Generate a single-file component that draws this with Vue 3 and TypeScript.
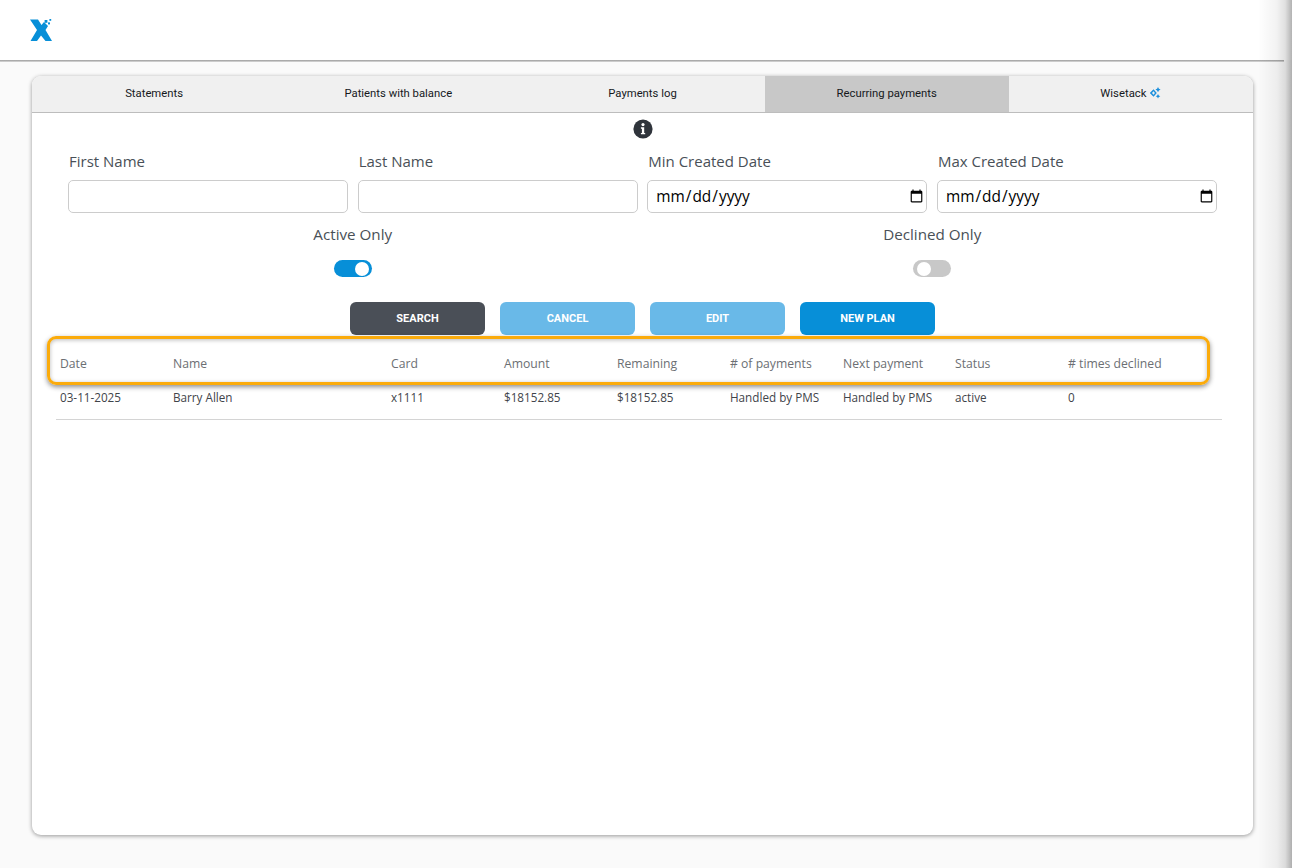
<script setup lang="ts">
import { ref } from 'vue'

const tabs = ['Statements', 'Patients with balance', 'Payments log', 'Recurring payments', 'Wisetack']
const activeTab = ref('Recurring payments')

const columns = ['Date', 'Name', 'Card', 'Amount', 'Remaining', '# of payments', 'Next payment', 'Status', '# times declined']
const rows = [
  ['03-11-2025', 'Barry Allen', 'x1111', '$18152.85', '$18152.85', 'Handled by PMS', 'Handled by PMS', 'active', '0']
]

const activeOnly = ref(true)
const declinedOnly = ref(false)
</script>

<template>
  <div class="page">
    <header class="topbar">
      <svg class="logo" viewBox="0 0 22 22" width="22" height="22">
        <path fill="#078fd8" d="M0 .5h8L11.5 6 14 3l4 4-2.500 4L22 22h-6.500L11 16.500 7 22H.5L7 11z" />
        <rect x="14.600" y="1" width="2.800" height="2.800" fill="#078fd8" />
        <rect x="18" y="3.400" width="2" height="2" fill="#078fd8" />
        <rect x="19.400" y="0" width="1.800" height="1.800" fill="#078fd8" />
      </svg>
    </header>

    <main class="content">
      <section class="card">
        <nav class="tabs">
          <button
            v-for="tab in tabs"
            :key="tab"
            class="tab"
            :class="{ active: tab === activeTab }"
            @click="activeTab = tab"
          >
            {{ tab }}
            <svg v-if="tab === 'Wisetack'" class="sparkle" viewBox="0 0 12 12" width="12" height="12">
              <path fill="#1b8fdc" d="M4.500 2.200 7.800 6 4.500 9.800.8 6zM4.500 4.300 3 6l1.500 1.700L5.900 6z" fill-rule="evenodd" />
              <path fill="#1b8fdc" d="M9 0l.9 1.700 1.700.9-1.700.9L9 5.200l-.9-1.700-1.700-.9 1.700-.9zM9 7l.8 1.500 1.500.8-1.500.8L9 11.600l-.8-1.500-1.500-.8 1.500-.8z" />
            </svg>
          </button>
        </nav>

        <div class="info-row">
          <svg viewBox="0 0 20 20" width="20" height="20">
            <circle cx="10" cy="10" r="9.600" fill="#2f343b" />
            <circle cx="10" cy="5.600" r="1.600" fill="#fff" />
            <path fill="#fff" d="M7.900 8.300h3.300v5.600h1v1.400H7.900v-1.400h1V9.700h-1z" />
          </svg>
        </div>

        <div class="filters">
          <label class="field">
            <span>First Name</span>
            <input type="text" />
          </label>
          <label class="field">
            <span>Last Name</span>
            <input type="text" />
          </label>
          <label class="field">
            <span>Min Created Date</span>
            <input type="date" />
          </label>
          <label class="field">
            <span>Max Created Date</span>
            <input type="date" />
          </label>
        </div>

        <div class="switches">
          <div class="switch-field">
            <span>Active Only</span>
            <button class="switch" :class="{ on: activeOnly }" @click="activeOnly = !activeOnly"><i></i></button>
          </div>
          <div class="switch-field">
            <span>Declined Only</span>
            <button class="switch" :class="{ on: declinedOnly }" @click="declinedOnly = !declinedOnly"><i></i></button>
          </div>
        </div>

        <div class="actions">
          <button class="btn dark">SEARCH</button>
          <button class="btn light">CANCEL</button>
          <button class="btn light">EDIT</button>
          <button class="btn primary">NEW PLAN</button>
        </div>

        <div class="table">
          <div class="row head">
            <div v-for="col in columns" :key="col">{{ col }}</div>
          </div>
          <div v-for="(row, i) in rows" :key="i" class="row body">
            <div v-for="(cell, j) in row" :key="j">{{ cell }}</div>
          </div>
          <div class="callout"></div>
        </div>
      </section>
    </main>

    <div class="edge-shadow"></div>
  </div>
</template>

<style scoped>
.page {
  position: relative;
  height: 868px;
  overflow: hidden;
  background: #fafafa;
  font-family: "Open Sans", "Liberation Sans", sans-serif;
}

.topbar {
  position: relative;
  height: 60px;
  display: flex;
  align-items: center;
  padding-left: 30px;
  background: #fff;
  box-sizing: border-box;
}

/* the rule under the header stops short of the right edge */
.topbar::after {
  content: "";
  position: absolute;
  left: 0;
  right: 8px;
  bottom: -2px;
  height: 2px;
  background: linear-gradient(to bottom, #9a9a9a, #dcdcdc);
}

.content {
  padding: 16px 39px 0 32px;
}

.card {
  height: 759px;
  background: #fff;
  border-radius: 9px;
  overflow: hidden;
  box-shadow: 0 1px 4px rgba(0, 0, 0, 0.4);
}

.tabs {
  display: grid;
  grid-template-columns: repeat(5, 1fr);
  height: 37px;
  background: #f0f0f0;
  border-bottom: 1px solid #bdbdbd;
  box-sizing: border-box;
}

.tab {
  display: flex;
  align-items: center;
  justify-content: center;
  gap: 3px;
  padding: 0 0 2px;
  border: none;
  background: transparent;
  color: #15181c;
  font-family: Roboto, "Liberation Sans", sans-serif;
  font-size: 11.300px;
  font-weight: 400;
  cursor: pointer;
}

.tab.active {
  background: #c8c8c8;
}

.info-row {
  display: flex;
  justify-content: center;
  padding-top: 6px;
  height: 20px;
}

.filters {
  display: grid;
  grid-template-columns: repeat(4, 1fr);
  column-gap: 9.700px;
  padding: 0 36.100px 0 36px;
  margin-top: 11px;
}

.field {
  display: flex;
  flex-direction: column;
}

.field span,
.switch-field span {
  line-height: 22px;
  color: #495057;
}

.field span {
  margin-bottom: 8px;
  padding-left: 1px;
  font-size: 15px;
}

.switch-field span {
  font-size: 15.200px;
}

.field input {
  height: 33px;
  padding: 0 0 0 7px;
  border: 1px solid #cccccc;
  border-radius: 5px;
  background: #fff;
  box-sizing: border-box;
  font-family: "Open Sans", "Liberation Sans", sans-serif;
  font-size: 15.400px;
  color: #000;
  outline: none;
}

.switches {
  display: grid;
  grid-template-columns: repeat(2, 1fr);
  column-gap: 10px;
  padding: 0 36px;
  margin-top: 10px;
}

.switch-field {
  display: flex;
  flex-direction: column;
  align-items: center;
}

.switch {
  position: relative;
  width: 38px;
  height: 17px;
  margin-top: 15px;
  padding: 0;
  border: none;
  border-radius: 9px;
  background: #c8c8c8;
  cursor: pointer;
}

.switch i {
  position: absolute;
  top: 1.500px;
  left: 3.500px;
  width: 14px;
  height: 14px;
  border-radius: 50%;
  background: #fff;
}

.switch.on {
  background: #078fd8;
}

.switch.on i {
  left: 21.500px;
}

.actions {
  display: flex;
  justify-content: center;
  gap: 15px;
  margin-top: 25px;
}

.btn {
  width: 135px;
  height: 33px;
  border: none;
  border-radius: 6px;
  color: #fff;
  font-family: Roboto, "Liberation Sans", sans-serif;
  font-size: 11px;
  font-weight: 700;
  cursor: pointer;
}

.btn.dark {
  background: #4a4f57;
}

.btn.light {
  background: #69b9e8;
}

.btn.primary {
  background: #078fd8;
}

.table {
  position: relative;
  margin: 4px 31px 0 24px;
  font-size: 12.200px;
}

.row {
  display: grid;
  grid-template-columns: 113px 218px 113px 113px 113px 113px 112px 113px 1fr;
  padding-left: 4px;
}

.row.head {
  height: 45px;
  padding-top: 16px;
  line-height: 18px;
  color: #6c6f73;
  box-sizing: border-box;
}

.row.body {
  height: 36px;
  padding-top: 4px;
  line-height: 18px;
  color: #3f444a;
  border-bottom: 1px solid #d4d4d4;
  box-sizing: border-box;
  font-size: 11.700px;
}

.callout {
  position: absolute;
  top: -3px;
  left: -9px;
  right: 12px;
  height: 49px;
  border: 3px solid #fbab0b;
  border-radius: 9px;
  box-sizing: border-box;
  box-shadow: 0 2px 5px rgba(0, 0, 0, 0.45), inset 0 1px 4px rgba(0, 0, 0, 0.28);
  pointer-events: none;
}

.edge-shadow {
  position: absolute;
  top: 0;
  right: 0;
  bottom: 0;
  width: 34px;
  background: linear-gradient(to right, rgba(0, 0, 0, 0), rgba(0, 0, 0, 0.05) 55%, rgba(0, 0, 0, 0.12) 80%, rgba(0, 0, 0, 0.3));
  pointer-events: none;
}
</style>

<style>
body {
  margin: 0;
}
</style>
